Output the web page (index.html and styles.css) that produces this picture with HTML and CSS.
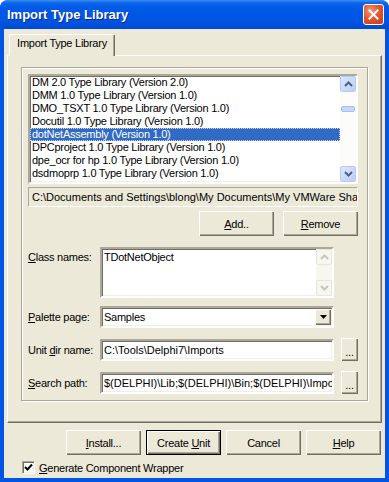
FILE: index.html
```html
<!DOCTYPE html>
<html lang="en">
<head>
	<meta charset="utf-8">
	<title>Import Type Library</title>
	<link rel="stylesheet" href="styles.css">
</head>
<body>
<div class="window">
	<div class="titlebar">
		<span class="title">Import Type Library</span>
		<span class="close">
			<svg width="11" height="11" viewBox="0 0 11 11"><path d="M1.5 1.5 L9.5 9.5 M9.5 1.5 L1.5 9.5" stroke="#fff" stroke-width="2" stroke-linecap="square"/></svg>
		</span>
	</div>
	<div class="client">
		<div class="tabs">
			<div class="tab">Import Type Library</div>
		</div>
		<div class="sheet">
			<div class="bevel">
				<div class="listbox">
					<ul class="items">
						<li>DM 2.0 Type Library (Version 2.0)</li>
						<li>DMM 1.0 Type Library (Version 1.0)</li>
						<li>DMO_TSXT 1.0 Type Library (Version 1.0)</li>
						<li>Docutil 1.0 Type Library (Version 1.0)</li>
						<li class="selected"><span>dotNetAssembly (Version 1.0)</span></li>
						<li>DPCproject 1.0 Type Library (Version 1.0)</li>
						<li>dpe_ocr for hp 1.0 Type Library (Version 1.0)</li>
						<li>dsdmoprp 1.0 Type Library (Version 1.0)</li>
						<li>DSO 1.0 Type Library (Version 1.0)</li>
					</ul>
					<div class="scrollbar">
						<div class="sb-btn">
							<svg width="9" height="6" viewBox="0 0 9 6"><path d="M1 5 L4.5 1.5 L8 5" fill="none" stroke="#4D6185" stroke-width="2"/></svg>
						</div>
						<div class="sb-track"><div class="sb-thumb"></div></div>
						<div class="sb-btn">
							<svg width="9" height="6" viewBox="0 0 9 6"><path d="M1 1 L4.5 4.5 L8 1" fill="none" stroke="#4D6185" stroke-width="2"/></svg>
						</div>
					</div>
				</div>
				<div class="pathbox">C:\Documents and Settings\blong\My Documents\My VMWare Shared Folders</div>
				<div class="list-buttons">
					<div class="btn"><span><u>A</u>dd..</span></div>
					<div class="btn"><span><u>R</u>emove</span></div>
				</div>
				<div class="field field-memo">
					<div class="label"><u>C</u>lass names:</div>
					<div class="memo">
						<div class="memo-text">TDotNetObject</div>
						<div class="scrollbar disabled">
							<div class="sb-btn">
								<svg width="9" height="6" viewBox="0 0 9 6"><path d="M1 5 L4.5 1.5 L8 5" fill="none" stroke="#C9C7BA" stroke-width="2"/></svg>
							</div>
							<div class="sb-track"></div>
							<div class="sb-btn">
								<svg width="9" height="6" viewBox="0 0 9 6"><path d="M1 1 L4.5 4.5 L8 1" fill="none" stroke="#C9C7BA" stroke-width="2"/></svg>
							</div>
						</div>
					</div>
				</div>
				<div class="field field-combo">
					<div class="label"><u>P</u>alette page:</div>
					<div class="combo">
						<div class="edit-text">Samples</div>
						<div class="drop">
							<svg width="7" height="4" viewBox="0 0 7 4"><path d="M0 0 H7 L3.5 4 Z" fill="#000"/></svg>
						</div>
					</div>
				</div>
				<div class="field">
					<div class="label">Unit <u>d</u>ir name:</div>
					<div class="edit"><div class="edit-text">C:\Tools\Delphi7\Imports</div></div>
					<div class="btn dots">...</div>
				</div>
				<div class="field">
					<div class="label"><u>S</u>earch path:</div>
					<div class="edit"><div class="edit-text">$(DELPHI)\Lib;$(DELPHI)\Bin;$(DELPHI)\Imports</div></div>
					<div class="btn dots">...</div>
				</div>
			</div>
		</div>
		<div class="dialog-buttons">
			<div class="btn"><span><u>I</u>nstall...</span></div>
			<div class="btn default"><span>Create <u>U</u>nit</span></div>
			<div class="btn"><span>Cancel</span></div>
			<div class="btn"><span><u>H</u>elp</span></div>
		</div>
		<div class="checkrow">
			<span class="checkbox">
				<svg width="9" height="9" viewBox="0 0 9 9"><path d="M1 4 L3.5 6.5 L8 1.5" fill="none" stroke="#000" stroke-width="2"/></svg>
			</span>
			<span><u>G</u>enerate Component Wrapper</span>
		</div>
	</div>
</div>
</body>
</html>
```

FILE: styles.css
```css
* {
	box-sizing: border-box;
}

body {
	margin: 0;
	background: #fff;
	font-family: "Liberation Sans", Arial, sans-serif;
	font-size: 11px;
	letter-spacing: -0.25px;
	color: #000;
}

u {
	text-decoration: underline;
	text-underline-offset: 1px;
}

.window {
	width: 389px;
	height: 482px;
	display: flex;
	flex-direction: column;
	background: #0055E5;
	border-radius: 8px 8px 0 0;
	overflow: hidden;
}

.titlebar {
	height: 29px;
	flex: none;
	display: flex;
	align-items: center;
	padding: 0 5px 0 7px;
	background: linear-gradient(#3D8FF5 0, #0A66E8 3px, #0059E8 8px, #0056E3 20px, #004AD3 29px);
}

.title {
	flex: 1;
	color: #fff;
	font-weight: bold;
	font-size: 13px;
	letter-spacing: 0;
	text-shadow: 1px 1px #0B2A8C;
}

.close {
	width: 21px;
	height: 21px;
	display: flex;
	align-items: center;
	justify-content: center;
	border: 1px solid #fff;
	border-radius: 3px;
	background: radial-gradient(circle at 35% 30%, #F09A7E 0, #E2582F 45%, #C63A12 100%);
}

.client {
	flex: 1;
	margin: 0 4px 4px;
	padding: 5px 4px 0 3px;
	background: #ECE9D8;
}

.tabs {
	height: 21px;
	padding-left: 2px;
}

.tab {
	position: relative;
	z-index: 1;
	width: 106px;
	height: 22px;
	padding-top: 2px;
	text-align: center;
	background: #ECE9D8;
	border-top: 1px solid #fff;
	border-left: 1px solid #fff;
	border-right: 1px solid #716F64;
	border-radius: 2px 2px 0 0;
	box-shadow: inset -1px 0 #ACA899;
}

.sheet {
	width: 375px;
	height: 368px;
	padding: 11px 0 0 13px;
	border: 1px solid;
	border-color: #fff #716F64 #716F64 #fff;
	box-shadow: inset -1px -1px #ACA899;
}

.bevel {
	width: 347px;
	height: 334px;
	padding: 6px 0 0 6px;
	border: 1px solid #ACA899;
	box-shadow: 1px 1px 0 #fff, inset 1px 1px 0 #fff;
}

.listbox {
	width: 330px;
	height: 110px;
	display: flex;
	background: #fff;
	border: 2px solid;
	border-color: #ACA899 #fff #fff #ACA899;
	box-shadow: inset 1px 1px #716F64, inset -1px -1px #F1EFE2;
	overflow: hidden;
}

.items {
	flex: 1;
	margin: 0;
	padding: 0;
	list-style: none;
	overflow: hidden;
}

.items li {
	height: 13px;
	line-height: 13px;
	padding-left: 2px;
	white-space: nowrap;
}

.items li.selected {
	background: #316AC5;
	color: #fff;
	outline: 1px dotted #C9D6F0;
	outline-offset: -1px;
}

.scrollbar {
	width: 16px;
	flex: none;
	display: flex;
	flex-direction: column;
	background: #FCFCFA;
}

.sb-btn {
	height: 16px;
	flex: none;
	display: flex;
	align-items: center;
	justify-content: center;
	border: 1px solid #B6CAF8;
	border-radius: 2px;
	background: linear-gradient(135deg, #DCE6FD, #BCCDF6);
}

.sb-track {
	flex: 1;
	padding-top: 14px;
}

.sb-thumb {
	height: 6px;
	margin: 0 1px;
	border: 1px solid #A9BDEF;
	border-radius: 2px;
	background: #C7D6FB;
}

.scrollbar.disabled {
	background: #F7F6F1;
}

.scrollbar.disabled .sb-btn {
	border-color: #E8E6DC;
	background: #F7F6F0;
}

.pathbox {
	width: 330px;
	height: 20px;
	margin-top: 3px;
	padding: 3px 0 0 3px;
	letter-spacing: 0;
	white-space: nowrap;
	overflow: hidden;
	border: 1px solid;
	border-color: #ACA899 #fff #fff #ACA899;
}

.list-buttons {
	display: flex;
	justify-content: flex-end;
	gap: 9px;
	width: 330px;
	margin-top: 4px;
}

.btn {
	width: 75px;
	height: 25px;
	display: flex;
	align-items: center;
	justify-content: center;
	white-space: nowrap;
	background: #ECE9D8;
	box-shadow: inset 1px 1px #fff, inset -1px -1px #716F64, inset -2px -2px #ACA899;
}

.btn.default {
	border: 1px solid #000;
}

.field {
	display: flex;
	align-items: center;
	margin-top: 10px;
}

.field-memo {
	align-items: flex-start;
	margin-top: 11px;
}

.field-combo {
	margin-top: 8px;
}

.label {
	width: 72px;
	flex: none;
	white-space: nowrap;
}

.field-memo .label {
	padding-top: 4px;
}

.memo,
.edit,
.combo {
	width: 234px;
	display: flex;
	background: #fff;
	border: 2px solid;
	border-color: #ACA899 #fff #fff #ACA899;
	box-shadow: inset 1px 1px #716F64, inset -1px -1px #F1EFE2;
	overflow: hidden;
}

.memo {
	height: 51px;
}

.memo-text {
	flex: 1;
	padding: 2px 0 0 2px;
}

.combo,
.edit {
	height: 22px;
}

.edit-text {
	flex: 1;
	align-self: center;
	padding-left: 2px;
	white-space: nowrap;
	overflow: hidden;
}

.edit .edit-text {
	letter-spacing: 0;
}

.drop {
	width: 16px;
	flex: none;
	display: flex;
	align-items: center;
	justify-content: center;
	margin: 1px 1px 1px 0;
	background: #ECE9D8;
	box-shadow: inset 1px 1px #fff, inset -1px -1px #716F64, inset -2px -2px #ACA899;
}

.btn.dots {
	width: 17px;
	height: 23px;
	margin-left: 7px;
	padding-top: 4px;
}

.dialog-buttons {
	display: flex;
	justify-content: flex-end;
	gap: 5px;
	margin-top: 7px;
}

.checkrow {
	display: flex;
	align-items: center;
	gap: 4px;
	margin: 6px 0 0 15px;
}

.checkbox {
	width: 13px;
	height: 13px;
	display: flex;
	align-items: center;
	justify-content: center;
	background: #fff;
	border: 1px solid;
	border-color: #ACA899 #fff #fff #ACA899;
	box-shadow: inset 1px 1px #716F64, inset -1px -1px #F1EFE2;
}
```
